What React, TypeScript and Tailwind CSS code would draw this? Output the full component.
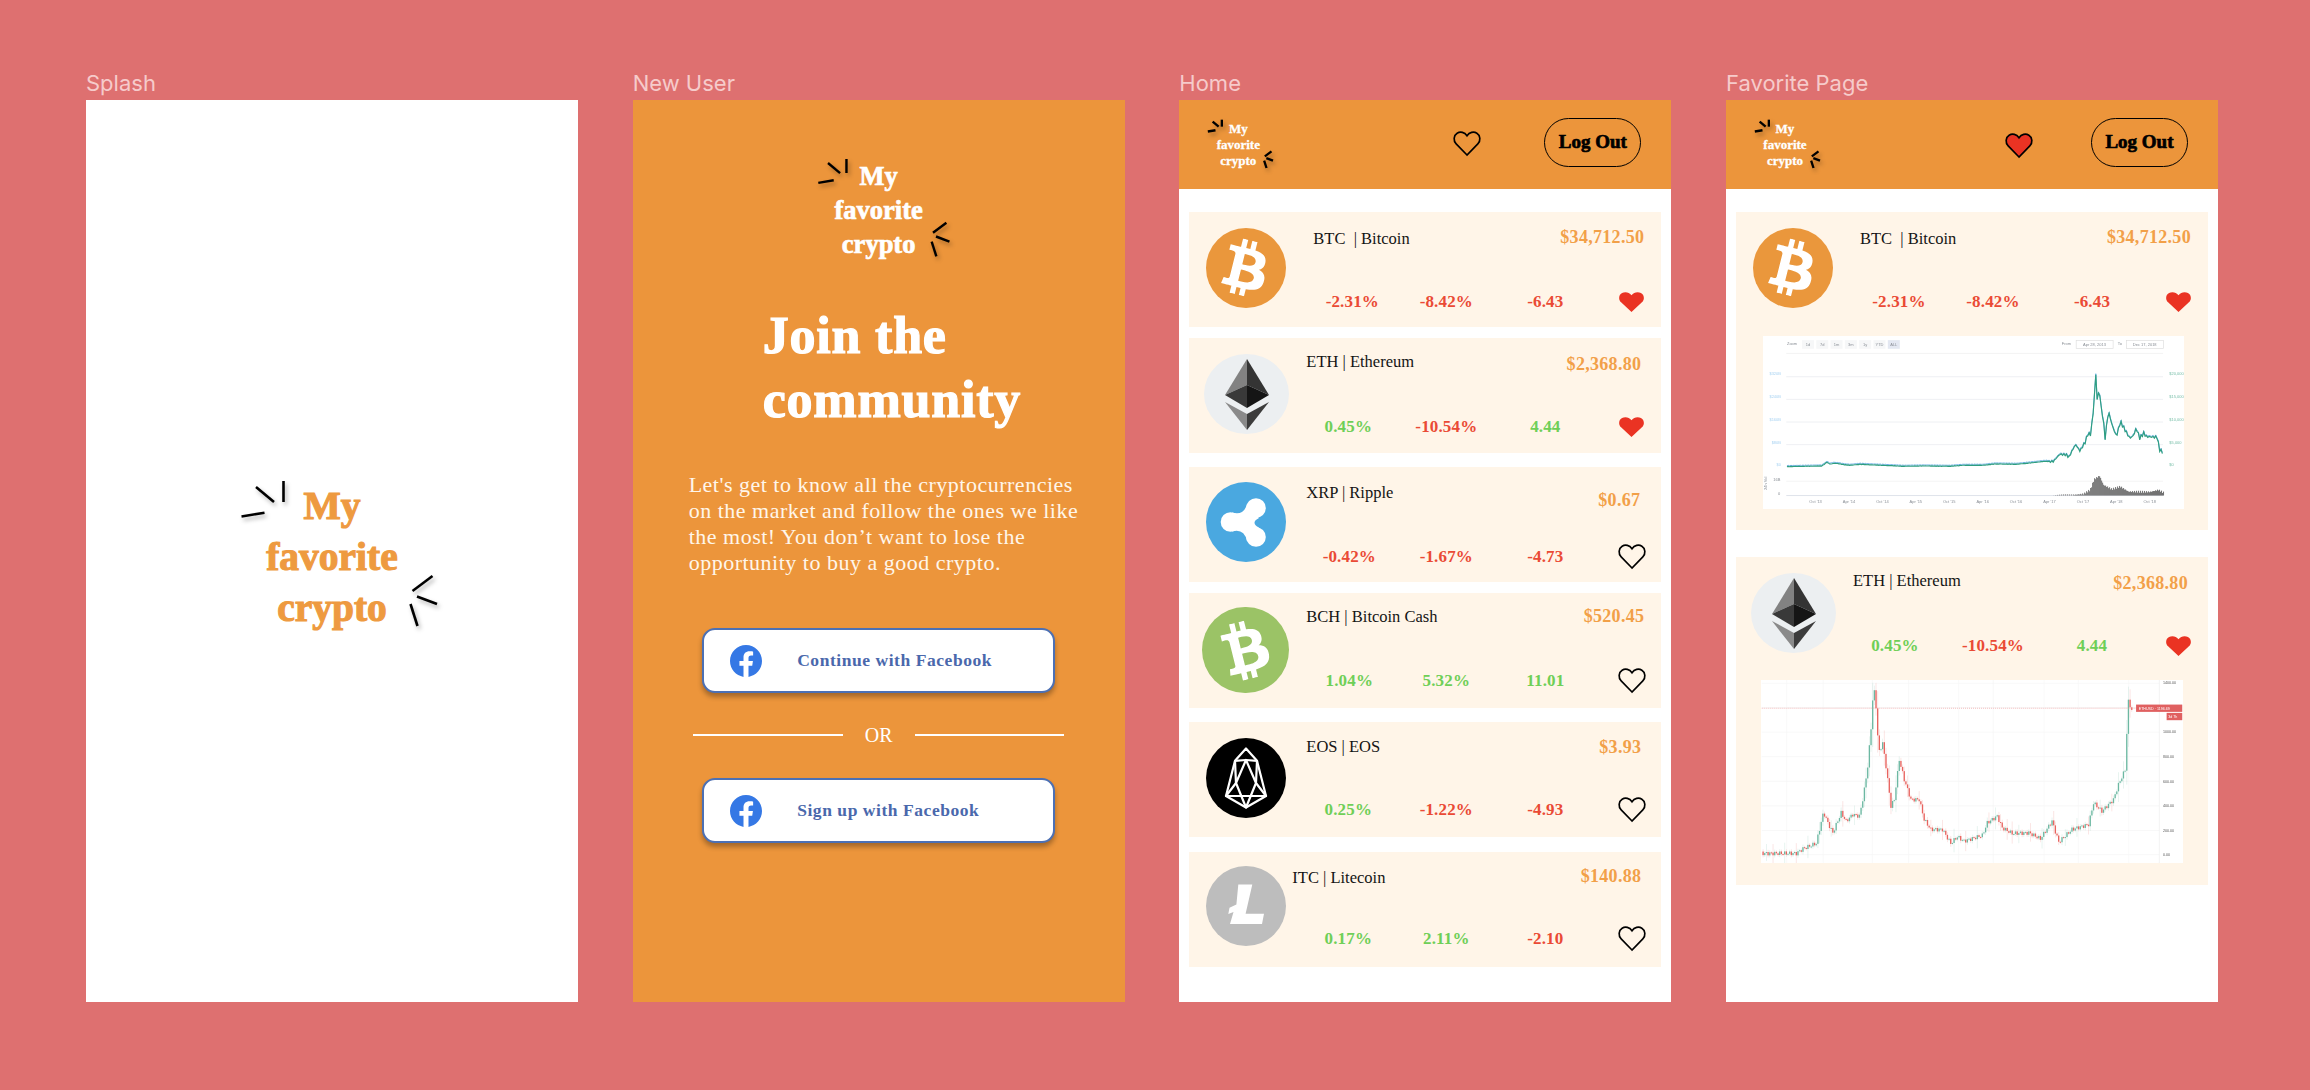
import type { ReactNode } from "react"
import { FaBtc } from "react-icons/fa"

const FATFACE = "font-['Liberation_Serif',serif] font-bold"
const BODY = "font-['Liberation_Serif',serif]"

const FB_PATH =
  "M24 12.073c0-6.627-5.373-12-12-12s-12 5.373-12 12c0 5.99 4.388 10.954 10.125 11.854v-8.385H7.078v-3.47h3.047V9.43c0-3.007 1.792-4.669 4.533-4.669 1.312 0 2.686.235 2.686.235v2.953H15.83c-1.491 0-1.956.925-1.956 1.874v2.25h3.328l-.532 3.47h-2.796v8.385C19.612 23.027 24 18.062 24 12.073z"
const HEART_PATH =
  "M12 21.5 L3 12.5 C0.5 10 0.8 5.8 3.8 4 C6.5 2.4 10 3.2 12 6 C14 3.2 17.5 2.4 20.2 4 C23.2 5.8 23.5 10 21 12.5 Z"
const HEART_BOX = "1.2 3 21.6 18.5"

const SPARKS = [
  [-76, -70, -58, -55],
  [-48.5, -76, -48.5, -55],
  [-90.5, -40.5, -67.5, -44.3],
  [80.5, 34, 100.5, 19],
  [85, 39.5, 105, 47],
  [78.5, 47, 85.5, 69],
]

const Logo = ({ textCls, lineCls, svgCls, sw }: { textCls: string; lineCls: string; svgCls: string; sw: number }) => (
  <div className={`relative text-center ${textCls}`}>
    <div className={lineCls}>My</div>
    <div className={lineCls}>favorite</div>
    <div className={lineCls}>crypto</div>
    <svg viewBox="-120 -90 240 180" className={`absolute left-1/2 top-1/2 -translate-x-1/2 -translate-y-1/2 drop-shadow-[2px_3px_2px_rgba(0,0,0,0.3)] ${svgCls}`}>
      {SPARKS.map((s, i) => (
        <line key={i} x1={s[0]} y1={s[1]} x2={s[2]} y2={s[3]} stroke="#000" strokeWidth={sw} />
      ))}
    </svg>
  </div>
)

const HeaderBar = ({ heart }: { heart: ReactNode }) => (
  <div className="flex h-[89px] items-start bg-[#EC953B]">
    <div className="ml-[33px] mt-[21px] w-[52px] shrink-0">
      <Logo
        textCls={`${FATFACE} text-[13px] text-white [-webkit-text-stroke:0.3px_white]`}
        lineCls="leading-[16px] whitespace-nowrap"
        svgCls="w-[80px] h-[60px]"
        sw={7}
      />
    </div>
    {heart}
    <div className={`ml-auto mr-[30px] mt-[18px] flex h-[49px] w-[97px] items-center justify-center rounded-full border-[1.5px] border-black text-[19px] text-black [-webkit-text-stroke:0.7px_black] ${FATFACE}`}>
      Log Out
    </div>
  </div>
)

const OutlineHeart = ({ className }: { className: string }) => (
  <svg viewBox={HEART_BOX} preserveAspectRatio="none" className={`overflow-visible ${className}`} fill="none" stroke="#000" strokeWidth="1.4">
    <path d={HEART_PATH} />
  </svg>
)

const RedHeart = ({ className }: { className: string }) => (
  <svg viewBox={HEART_BOX} preserveAspectRatio="none" className={className} fill="#EA3323">
    <path d={HEART_PATH} />
  </svg>
)

// coin logos
const BtcLogo = ({ className }: { className: string }) => (
  <div className={`flex shrink-0 items-center justify-center rounded-full bg-[#EA973C] ${className}`}>
    <FaBtc className="size-[56px] rotate-[14deg] text-white" />
  </div>
)

const BchLogo = ({ className }: { className: string }) => (
  <div className={`flex shrink-0 items-center justify-center rounded-full bg-[#9BC366] ${className}`}>
    <FaBtc className="size-[58px] -rotate-[14deg] text-white" />
  </div>
)

const EthLogo = ({ className }: { className: string }) => (
  <svg viewBox="0 0 85 80" preserveAspectRatio="none" className={`shrink-0 ${className}`}>
    <ellipse cx="42.5" cy="40" rx="42.5" ry="40" fill="#ECEFF1" />
    <polygon points="43,5 21,41 43,31" fill="#828282" />
    <polygon points="43,5 65,41 43,31" fill="#343434" />
    <polygon points="21,41 43,31 43,54" fill="#393939" />
    <polygon points="65,41 43,31 43,54" fill="#151515" />
    <polygon points="21,48 43,60 43,76" fill="#8A8A8A" />
    <polygon points="65,48 43,60 43,76" fill="#3C3C3C" />
  </svg>
)

const XrpLogo = ({ className }: { className: string }) => (
  <svg viewBox="0 0 80 80" className={`shrink-0 ${className}`}>
    <circle cx="40" cy="40" r="40" fill="#4AA8E0" />
    <g fill="#fff">
      <circle cx="50" cy="26" r="9.8" />
      <circle cx="24.5" cy="40" r="9.8" />
      <circle cx="50" cy="55" r="9.8" />
      <path d="M26 30.5 Q38 34 41 22 L53 36 Q44 40.5 53 45.5 L41 59 Q38 46 26 49.5 Z" />
    </g>
  </svg>
)

const EosLogo = ({ className }: { className: string }) => (
  <svg viewBox="0 0 80 80" className={`shrink-0 ${className}`}>
    <circle cx="40" cy="40" r="40" fill="#000" />
    <g fill="none" stroke="#fff" strokeWidth="2.2" strokeLinejoin="round">
      <polygon points="40,10.5 51,22.8 60,58 40,69.5 20,58 29,22.8" />
      <polygon points="40,22 50,45 40,69.5 30,45" />
      <path d="M29 22.8 L40 22 L51 22.8 M29 22.8 L30 45 L20 58 L33 58 M51 22.8 L50 45 L60 58 L47 58 M33 58 L47 58" />
    </g>
  </svg>
)

const LtcLogo = ({ className }: { className: string }) => (
  <svg viewBox="0 0 80 80" className={`shrink-0 ${className}`}>
    <circle cx="40" cy="40" r="40" fill="#BDBDBD" />
    <polygon points="32.3,18.5 46.3,18.5 39.6,47.7 58,47.7 56,57.9 24,57.9 27.5,46 22.3,48 23.5,41.7 30.4,38.6" fill="#fff" />
  </svg>
)

type Coin = {
  logo: ReactNode
  name: string
  price: string
  values: string[]
  fav: boolean
  nameCls: string
  priceCls: string
  firstCls: string
  rowCls: string
}

const Val = ({ v, className }: { v: string; className: string }) => (
  <span className={`block shrink-0 text-center text-[17px] font-bold leading-[20px] tracking-[0.15px] ${BODY} ${v.startsWith("-") ? "text-[#EA4A35]" : "text-[#6FCF57]"} ${className}`}>
    {v}
  </span>
)

const CoinTop = ({ coin }: { coin: Coin }) => (
  <div className="flex h-[115px]">
    <div className="w-[100px] shrink-0">{coin.logo}</div>
    <div className="flex flex-1 flex-col">
      <div className="flex items-start justify-between">
        <span className={`whitespace-pre text-[16.5px] leading-[20px] text-[#141414] ${BODY} ${coin.nameCls}`}>{coin.name}</span>
        <span className={`text-[18px] font-bold leading-[20px] tracking-[0.3px] text-[#F2A048] ${BODY} ${coin.priceCls}`}>{coin.price}</span>
      </div>
      <div className={`ml-[16px] mt-auto flex items-center ${coin.rowCls}`}>
        <Val v={coin.values[0]} className={`w-[94px] ${coin.firstCls}`} />
        <Val v={coin.values[1]} className="w-[94px]" />
        <Val v={coin.values[2]} className="w-[104px]" />
        {coin.fav ? (
          <RedHeart className="ml-[22px] h-[20px] w-[25px]" />
        ) : (
          <OutlineHeart className="ml-[22px] h-[23px] w-[26px]" />
        )}
      </div>
    </div>
  </div>
)

const btc: Coin = {
  logo: <BtcLogo className="ml-[17px] mt-[16px] size-[80px]" />,
  name: "BTC  | Bitcoin",
  price: "$34,712.50",
  values: ["-2.31%", "-8.42%", "-6.43"],
  fav: true,
  nameCls: "ml-[24px] mt-[17px]",
  priceCls: "mr-[17px] mt-[15px]",
  firstCls: "",
  rowCls: "mb-[15px]",
}

const eth: Coin = {
  logo: <EthLogo className="ml-[15px] mt-[16px] h-[80px] w-[85px]" />,
  name: "ETH | Ethereum",
  price: "$2,368.80",
  values: ["0.45%", "-10.54%", "4.44"],
  fav: true,
  nameCls: "ml-[17px] mt-[14px]",
  priceCls: "mr-[20px] mt-[16px]",
  firstCls: "pr-[8px]",
  rowCls: "mb-[16px]",
}

const homeCoins: { coin: Coin; cls: string }[] = [
  { coin: btc, cls: "mt-[23px]" },
  { coin: eth, cls: "mt-[11px]" },
  {
    coin: {
      logo: <XrpLogo className="ml-[17px] mt-[15px] size-[80px]" />,
      name: "XRP | Ripple",
      price: "$0.67",
      values: ["-0.42%", "-1.67%", "-4.73"],
      fav: false,
      nameCls: "ml-[17px] mt-[16px]",
      priceCls: "mr-[21px] mt-[23px]",
      firstCls: "pr-[6px]",
      rowCls: "mb-[14px]",
    },
    cls: "mt-[14px]",
  },
  {
    coin: {
      logo: <BchLogo className="ml-[13px] mt-[14px] h-[86px] w-[87px]" />,
      name: "BCH | Bitcoin Cash",
      price: "$520.45",
      values: ["1.04%", "5.32%", "11.01"],
      fav: false,
      nameCls: "ml-[17px] mt-[14px]",
      priceCls: "mr-[17px] mt-[13px]",
      firstCls: "pr-[6px]",
      rowCls: "mb-[16px]",
    },
    cls: "mt-[11px]",
  },
  {
    coin: {
      logo: <EosLogo className="ml-[17px] mt-[16px] size-[80px]" />,
      name: "EOS | EOS",
      price: "$3.93",
      values: ["0.25%", "-1.22%", "-4.93"],
      fav: false,
      nameCls: "ml-[17px] mt-[15px]",
      priceCls: "mr-[20px] mt-[15px]",
      firstCls: "pr-[8px]",
      rowCls: "mb-[16px]",
    },
    cls: "mt-[14px]",
  },
  {
    coin: {
      logo: <LtcLogo className="ml-[17px] mt-[14px] size-[80px]" />,
      name: "ITC | Litecoin",
      price: "$140.88",
      values: ["0.17%", "2.11%", "-2.10"],
      fav: false,
      nameCls: "ml-[3px] mt-[16px]",
      priceCls: "mr-[20px] mt-[14px]",
      firstCls: "pr-[8px]",
      rowCls: "mb-[17px]",
    },
    cls: "mt-[15px]",
  },
]

const interp = (pts: number[][], x: number) => {
  for (let i = 1; i < pts.length; i++) {
    const [x0, y0] = pts[i - 1]
    const [x1, y1] = pts[i]
    if (x <= x1) return y0 + ((y1 - y0) * (x - x0)) / (x1 - x0)
  }
  return pts[pts.length - 1][1]
}

// bitcoin chart, coordinates are in the zoomed crop of the original
const BTC_LINE = [
  [110, 440], [215, 438], [230, 427], [240, 433], [250, 430], [265, 431], [280, 434], [300, 436], [330, 433], [370, 435],
  [420, 437], [460, 439], [520, 438], [600, 439], [640, 436], [700, 436], [735, 432], [800, 433], [850, 428], [885, 424],
  [910, 425], [930, 403], [950, 405], [957, 413], [972, 382], [978, 375], [990, 393], [1005, 370], [1015, 340], [1022, 345],
  [1030, 280], [1038, 165], [1043, 255], [1048, 200], [1053, 258], [1060, 295], [1066, 355], [1075, 280], [1080, 285],
  [1085, 310], [1100, 350], [1112, 305], [1120, 320], [1140, 355], [1150, 348], [1160, 325], [1170, 355], [1182, 340],
  [1190, 350], [1222, 352], [1230, 390], [1240, 398],
]

const BTC_VOL = [
  [910, 527], [960, 526], [1000, 522], [1020, 510], [1032, 478], [1048, 468], [1060, 495], [1085, 508], [1110, 500],
  [1135, 515], [1200, 516], [1225, 510], [1240, 518],
]

const BtcChart = () => {
  const wiggly = []
  for (let x = 110; x <= 1240; x += 4) {
    const amp = x > 1000 ? 5 : x > 900 ? 3 : 0.6
    wiggly.push([x, interp(BTC_LINE, x) + Math.sin(x * 2.3) * amp])
  }
  const line = wiggly.map((p) => p.join(",")).join(" ")
  const blue = wiggly.map((p) => `${p[0]},${p[1] - 3}`).join(" ")
  const bars = []
  for (let x = 910; x <= 1240; x += 3) {
    const y = interp(BTC_VOL, x) + Math.sin(x * 3.1) * 3
    bars.push(<rect key={x} x={x} y={y} width="3" height={Math.max(527 - y, 0)} fill="#6d6d6d" />)
  }
  const hText = "fill-[#8a8f96] text-[12px] font-['Liberation_Sans',sans-serif]"
  return (
    <svg viewBox="38 48 1265 519" className="ml-[27px] h-[173px] w-[421px] bg-white blur-[0.4px]">
      {[170, 238, 306, 374].map((y) => (
        <line key={y} x1="108" x2="1240" y1={y} y2={y} stroke="#e6e9ed" strokeWidth="2" />
      ))}
      <line x1="108" x2="1240" y1="100" y2="100" stroke="#eee" strokeWidth="2" />
      <line x1="108" x2="1240" y1="484" y2="484" stroke="#eee" strokeWidth="2" />
      <line x1="108" x2="1240" y1="527" y2="527" stroke="#dfe3ea" strokeWidth="3" />
      {bars}
      <polyline points={blue} fill="none" stroke="#6fb2e6" strokeWidth="3" />
      <polyline points={line} fill="none" stroke="#2f9e80" strokeWidth="3.5" />
      <text x="110" y="76" className={hText}>Zoom</text>
      {["1d", "7d", "1m", "3m", "1y", "YTD", "ALL"].map((t, i) => (
        <g key={t}>
          <rect x={155 + i * 43} y="60" width="36" height="26" fill={t === "ALL" ? "#e4e8f2" : "#f6f7f8"} />
          <text x={173 + i * 43} y="77" textAnchor="middle" className={hText}>{t}</text>
        </g>
      ))}
      <text x="936" y="76" className={hText}>From</text>
      <rect x="979" y="61" width="111" height="24" fill="#fff" stroke="#ddd" strokeWidth="2" />
      <text x="1034" y="77" textAnchor="middle" className={hText}>Apr 28, 2013</text>
      <text x="1104" y="76" className={hText}>To</text>
      <rect x="1130" y="61" width="111" height="24" fill="#fff" stroke="#ddd" strokeWidth="2" />
      <text x="1185" y="77" textAnchor="middle" className={hText}>Dec 17, 2018</text>
      {[["$320B", 166], ["$240B", 234], ["$160B", 303], ["$80B", 371]].map(([t, y]) => (
        <text key={t} x="92" y={y} textAnchor="end" className="fill-[#a9d3f2] text-[12px] font-['Liberation_Sans',sans-serif]">{t}</text>
      ))}
      <text x="92" y="439" textAnchor="end" className="fill-[#a9d3f2] text-[12px] font-['Liberation_Sans',sans-serif]">$0</text>
      {[["$20,000", 166], ["$15,000", 234], ["$10,000", 303], ["$5,000", 371], ["$0", 439]].map(([t, y]) => (
        <text key={t} x="1259" y={y} className="fill-[#7cc0ab] text-[12px] font-['Liberation_Sans',sans-serif]">{t}</text>
      ))}
      <text x="90" y="483" textAnchor="end" className={hText}>16B</text>
      <text x="90" y="525" textAnchor="end" className={hText}>0</text>
      <text x="50" y="510" transform="rotate(-90 50 510)" className={hText}>24h Vol</text>
      {["Oct '13", "Apr '14", "Oct '14", "Apr '15", "Oct '15", "Apr '16", "Oct '16", "Apr '17", "Oct '17", "Apr '18", "Oct '18"].map((t, i) => (
        <text key={t} x={196 + i * 100.4} y="549" textAnchor="middle" className={hText}>{t}</text>
      ))}
    </svg>
  )
}

const ETH_CURVE = [
  [125, 942], [230, 942], [250, 928], [290, 912], [312, 818], [325, 850], [340, 880], [365, 820], [380, 845], [400, 825],
  [420, 830], [432, 770], [445, 680], [458, 530], [462, 430], [470, 500], [478, 640], [490, 610], [500, 680], [515, 800],
  [525, 780], [540, 660], [555, 720], [575, 780], [600, 780], [615, 840], [635, 870], [670, 870], [695, 912], [715, 892],
  [735, 905], [790, 888], [805, 850], [835, 830], [850, 865], [880, 882], [930, 880], [965, 898], [1000, 845], [1020, 908],
  [1060, 870], [1110, 855], [1125, 790], [1150, 815], [1185, 780], [1200, 735], [1220, 690], [1225, 580], [1230, 485], [1240, 510],
]

const EthChart = () => {
  const candles = []
  for (let x = 125; x < 1240; x += 5) {
    const a = interp(ETH_CURVE, x) + Math.sin(x * 1.7) * 6
    const b = interp(ETH_CURVE, x + 5) + Math.sin((x + 5) * 1.7) * 6
    const up = b < a
    const col = up ? "#6CB8A2" : "#E8635E"
    const top = Math.min(a, b)
    const h = Math.max(Math.abs(a - b), 3)
    const wick = 3 + Math.abs(a - b) * 0.35 + (Math.sin(x * 0.9) > 0.85 ? 20 : 0)
    candles.push(
      <g key={x}>
        <line x1={x + 2} x2={x + 2} y1={top - wick} y2={top + h + wick} stroke={col} strokeWidth="1" opacity="0.5" />
        <rect x={x} y={top} width="4" height={h} fill={col} />
      </g>,
    )
  }
  const axis = "fill-[#555] text-[11px] font-['Liberation_Sans',sans-serif]"
  return (
    <svg viewBox="123 420 1266 551" className="ml-[25px] h-[183px] w-[422px] bg-white blur-[0.4px]">
      {[430, 503, 577, 651, 725, 799, 873, 946].map((y) => (
        <line key={y} x1="123" x2="1320" y1={y} y2={y} stroke="#f5f5f5" strokeWidth="2" />
      ))}
      {[198, 308, 456, 565, 716, 820, 973, 1076, 1228].map((x) => (
        <line key={x} x1={x} x2={x} y1="420" y2="971" stroke="#f6f6f6" strokeWidth="2" />
      ))}
      <line x1="1320" x2="1320" y1="420" y2="971" stroke="#ececec" strokeWidth="2" />
      {candles}
      <line x1="123" x2="1250" y1="505" y2="505" stroke="#EF9A9A" strokeWidth="2" strokeDasharray="3 3" />
      {[["1400.00", 433], ["1000.00", 581], ["800.00", 655], ["600.00", 729], ["400.00", 803], ["200.00", 877], ["0.00", 950]].map(([t, y]) => (
        <text key={t} x="1331" y={y} className={axis}>{t}</text>
      ))}
      <rect x="1250" y="494" width="139" height="22" fill="#E06060" />
      <text x="1258" y="509" className="fill-white text-[11px] font-['Liberation_Sans',sans-serif]">ETHUSD · 1196.69</text>
      <rect x="1342" y="519" width="47" height="22" fill="#E06060" />
      <text x="1347" y="534" className="fill-white text-[11px] font-['Liberation_Sans',sans-serif]">3d 7h</text>
    </svg>
  )
}

const FbButton = ({ label, className }: { label: string; className: string }) => (
  <div className={`mx-auto flex h-[65px] w-[353px] items-center rounded-[13px] border-2 border-[#4C70B4] bg-white pl-[26px] shadow-[0_4px_5px_rgba(0,0,0,0.3)] ${className}`}>
    <svg viewBox="0 0 24 24" className="size-[32px]" fill="#3578E5">
      <path d={FB_PATH} />
    </svg>
    <span className={`ml-[35px] text-[17.5px] font-bold tracking-[0.55px] text-[#4A68AC] ${BODY}`}>{label}</span>
  </div>
)

const Frame = ({ label, className, children }: { label: string; className: string; children: ReactNode }) => (
  <div className="w-[492px] shrink-0">
    <div className="h-[30px] font-['Inter',sans-serif] text-[22px] leading-[26px] text-[#F6CBCB]">{label}</div>
    <div className={`h-[902px] ${className}`}>{children}</div>
  </div>
)

export default function App() {
  return (
    <div className="flex h-[1090px] w-[2310px] gap-x-[54.67px] overflow-hidden bg-[#DE7070] pl-[86px] pt-[70px]">
      <Frame label="Splash" className="flex items-center justify-center bg-white pt-[12px]">
        <Logo
          textCls={`${FATFACE} text-[39.5px] text-[#EE9A40] [-webkit-text-stroke:1.1px_#EE9A40]`}
          lineCls="leading-[51px]"
          svgCls="w-[240px] h-[180px]"
          sw={2.6}
        />
      </Frame>

      <Frame label="New User" className="bg-[#EC953B] pt-[59px] text-white">
        <Logo
          textCls={`${FATFACE} text-[26.5px] [-webkit-text-stroke:0.7px_white]`}
          lineCls="leading-[34px]"
          svgCls="w-[161px] h-[121px]"
          sw={3.6}
        />
        <h1 className={`ml-[130px] mt-[43px] text-[52px] leading-[64px] tracking-[0.8px] [-webkit-text-stroke:1.2px_white] ${FATFACE}`}>
          Join the
          <br />
          community
        </h1>
        <p className={`ml-[56px] mt-[40px] whitespace-pre-line text-[22px] leading-[26px] tracking-[0.5px] text-[#FFF6EA] ${BODY}`}>
          {"Let's get to know all the cryptocurrencies\non the market and follow the ones we like\nthe most! You don’t want to lose the\nopportunity to buy a good crypto."}
        </p>
        <FbButton label="Continue with Facebook" className="mt-[52px]" />
        <div className="ml-[60px] mt-[32px] flex h-[20px] items-center">
          <div className="h-[2px] w-[150px] bg-white" />
          <span className={`w-[72px] text-center text-[20px] ${BODY}`}>OR</span>
          <div className="h-[2px] w-[149px] bg-white" />
        </div>
        <FbButton label="Sign up with Facebook" className="mt-[33px]" />
      </Frame>

      <Frame label="Home" className="bg-white">
        <HeaderBar heart={<OutlineHeart className="ml-[190px] mt-[32px] h-[23px] w-[26px]" />} />
        <div className="px-[10px]">
          {homeCoins.map(({ coin, cls }) => (
            <div key={coin.name} className={`bg-[#FFF5E8] ${cls}`}>
              <CoinTop coin={coin} />
            </div>
          ))}
        </div>
      </Frame>

      <Frame label="Favorite Page" className="bg-white">
        <HeaderBar
          heart={
            <svg viewBox={HEART_BOX} preserveAspectRatio="none" className="ml-[195px] mt-[34px] h-[23px] w-[26px] overflow-visible" fill="#EA3323" stroke="#000" strokeWidth="1.4">
              <path d={HEART_PATH} />
            </svg>
          }
        />
        <div className="px-[10px]">
          <div className="mt-[23px] h-[318px] bg-[#FFF5E8]">
            <CoinTop coin={btc} />
            <div className="mt-[9px]">
              <BtcChart />
            </div>
          </div>
          <div className="mt-[27px] h-[328px] bg-[#FFF5E8]">
            <CoinTop coin={eth} />
            <div className="mt-[8px]">
              <EthChart />
            </div>
          </div>
        </div>
      </Frame>
    </div>
  )
}
